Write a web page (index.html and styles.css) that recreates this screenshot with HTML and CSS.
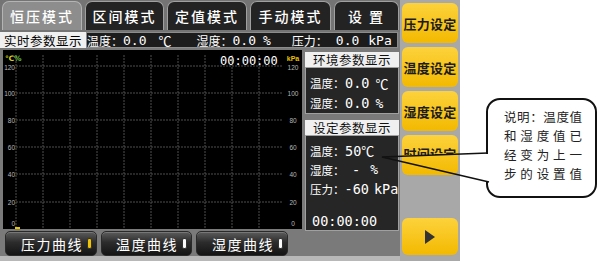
FILE: index.html
```html
<!DOCTYPE html>
<html lang="zh">
<head>
<meta charset="utf-8">
<title>恒压模式</title>
<link rel="stylesheet" href="styles.css">
</head>
<body>
<div class="page">
  <div class="device">
    <div class="main">
      <div class="tabs">
        <div class="tab tab-active w80">恒压模式</div>
        <div class="tab w79">区间模式</div>
        <div class="tab w80">定值模式</div>
        <div class="tab w81">手动模式</div>
        <div class="tab w65">设&nbsp;置</div>
      </div>
      <div class="status">
        <div class="status-label">实时参数显示</div>
        <div class="status-values">
          <span class="lbl">温度：</span><span class="num">0.0</span><span class="unit u1">℃</span>
          <span class="lbl g2">湿度：</span><span class="num">0.0</span><span class="unit u2">%</span>
          <span class="lbl g3">压力：</span><span class="num n3">0.0</span><span class="unit u3">kPa</span>
        </div>
      </div>
      <div class="content">
        <div class="chart">
          <svg width="299" height="179" viewBox="0 0 299 179">
            <g class="grid">
              <line x1="13" y1="5" x2="13" y2="179"/>
              <line x1="40" y1="5" x2="40" y2="179"/>
              <line x1="67" y1="5" x2="67" y2="179"/>
              <line x1="94" y1="5" x2="94" y2="179"/>
              <line x1="121" y1="5" x2="121" y2="179"/>
              <line x1="148" y1="5" x2="148" y2="179"/>
              <line x1="175" y1="5" x2="175" y2="179"/>
              <line x1="202" y1="5" x2="202" y2="179"/>
              <line x1="229" y1="5" x2="229" y2="179"/>
              <line x1="256" y1="5" x2="256" y2="179"/>
              <line x1="13" y1="16" x2="279" y2="16"/>
              <line x1="13" y1="43" x2="279" y2="43"/>
              <line x1="13" y1="70" x2="279" y2="70"/>
              <line x1="13" y1="97" x2="279" y2="97"/>
              <line x1="13" y1="124" x2="279" y2="124"/>
              <line x1="13" y1="152" x2="279" y2="152"/>
            </g>
            <text class="legend" x="2" y="11"><tspan class="lg-y">℃</tspan><tspan class="lg-g">%</tspan></text>
            <g class="axis-left">
              <text x="12" y="20">120</text>
              <text x="12" y="46">100</text>
              <text x="12" y="73">80</text>
              <text x="12" y="100">60</text>
              <text x="12" y="127">40</text>
              <text x="12" y="155">20</text>
              <text x="12" y="176">0</text>
            </g>
            <text class="kpa" x="290" y="11">kPa</text>
            <g class="axis-right">
              <text x="290" y="20">120</text>
              <text x="290" y="46">100</text>
              <text x="290" y="73">80</text>
              <text x="290" y="100">60</text>
              <text x="290" y="127">40</text>
              <text x="290" y="155">20</text>
              <text x="290" y="176">0</text>
            </g>
            <line class="point" x1="12" y1="178" x2="17" y2="178"/>
            <text class="chart-time" x="217" y="15">00:00:00</text>
          </svg>
        </div>
        <div class="panel">
          <div class="panel-head">环境参数显示</div>
          <div class="panel-box env">
            <div class="pline"><span class="plbl">温度：</span><span class="num">0.0</span><span class="punit pu1">℃</span></div>
            <div class="pline"><span class="plbl">湿度：</span><span class="num">0.0</span><span class="punit pu2">%</span></div>
          </div>
          <div class="panel-head head2">设定参数显示</div>
          <div class="panel-box set">
            <div class="pline"><span class="plbl">温度：</span><span class="num">50</span><span class="punit">℃</span></div>
            <div class="pline"><span class="plbl">湿度：</span><span class="num dash">-</span><span class="punit pu3">%</span></div>
            <div class="pline"><span class="plbl">压力：</span><span class="num">-60</span><span class="punit pu4">kPa</span></div>
            <div class="pline ptime"><span class="num">00:00:00</span></div>
          </div>
        </div>
      </div>
      <div class="curves">
        <div class="cbtn w92">压力曲线<span class="pill pill-y"></span></div>
        <div class="cbtn w91">温度曲线<span class="pill"></span></div>
        <div class="cbtn w92">湿度曲线<span class="pill"></span></div>
      </div>
      <div class="footer"></div>
    </div>
    <div class="side">
      <div class="ybtn">压力设定</div>
      <div class="ybtn">温度设定</div>
      <div class="ybtn">湿度设定</div>
      <div class="ybtn ybtn-clip"><span class="clip">时间设定</span></div>
      <div class="side-spacer"></div>
      <div class="ybtn play">
        <svg width="10" height="14" viewBox="0 0 10 14"><polygon points="0,0 10,7 0,14" fill="#333"/></svg>
      </div>
    </div>
  </div>
  <div class="note">
    <div class="note-line">说明：温度值</div>
    <div class="note-line">和湿度值已</div>
    <div class="note-line">经变为上一</div>
    <div class="note-line">步的设置值</div>
  </div>
  <svg class="pointer" width="600" height="261" viewBox="0 0 600 261">
    <rect x="484" y="154" width="6" height="27" fill="#fff"/>
    <polyline points="488,153 382,157 489,182" fill="none" stroke="#111" stroke-width="1.6"/>
  </svg>
</div>
</body>
</html>
```
FILE: styles.css
```css
* { box-sizing: border-box; margin: 0; padding: 0; }
html, body { width: 600px; height: 261px; background: #fff; overflow: hidden; }
body { font-family: "Noto Sans CJK SC", "Noto Sans", sans-serif; }

.page { position: relative; display: flex; width: 600px; height: 261px; }
.device { display: flex; width: 460px; height: 261px; }

.main { width: 400px; background: #7a7a7a; display: flex; flex-direction: column; }

/* tabs */
.tabs { display: flex; gap: 3px; height: 32px; padding: 1px 0 2px 2px; background: #747474; }
.tab {
  display: flex; align-items: center; justify-content: center;
  color: #fff; font-size: 14px; letter-spacing: 2px; font-weight: 500;
  background: #232323; border: 1px solid #a0a0a0; border-bottom: none;
  border-radius: 7px 7px 0 0;
}
.tab-active { background: #8d8d8d; border-color: #b4b4b4; }
.w80 { width: 80px; } .w79 { width: 79px; } .w81 { width: 81px; } .w65 { width: 65px; }

/* status row */
.status { display: flex; height: 16px; margin-bottom: 2px; }
.status-label {
  width: 86px; background: #f0f0f0; color: #000; font-size: 12.5px;
  display: flex; align-items: center; justify-content: center; letter-spacing: 0.5px;
}
.status-values {
  flex: 1; margin-right: 2px; background: #1c1c1c; border: 1px solid #8c8c8c;
  color: #fff; font-size: 12px; display: flex; align-items: center; white-space: nowrap;
}
.lbl { display: inline-block; width: 36px; font-size: 12px; }
.num { font-family: "DejaVu Sans Mono", monospace; font-size: 13px; }
.unit { font-family: "DejaVu Sans Mono", "Noto Sans CJK SC", monospace; font-size: 13px; }
.u1 { margin-left: 12px; }
.g2 { margin-left: 25px; }
.u2 { margin-left: 7px; }
.g3 { margin-left: 21px; }
.n3 { margin-left: 8px; }
.u3 { margin-left: 9px; }

/* content */
.content { display: flex; gap: 3px; height: 179px; padding-left: 3px; }
.chart { width: 299px; height: 179px; background: #000; }
.chart svg { display: block; }
.grid line { stroke: #4e4e4e; stroke-width: 1; stroke-dasharray: 2 1; }
.axis-left text { fill: #b8b8b8; font-family: "Liberation Sans", sans-serif; font-size: 6.5px; text-anchor: end; }
.axis-right text { fill: #b8b8b8; font-family: "Liberation Sans", sans-serif; font-size: 6.5px; text-anchor: middle; }
.kpa { fill: #e6c200; font-family: "Liberation Sans", sans-serif; font-size: 7px; font-weight: 700; text-anchor: middle; }
.legend { font-family: "DejaVu Sans", sans-serif; font-size: 7.5px; font-weight: 700; }
.lg-y { fill: #d9cf1a; }
.lg-g { fill: #6fc040; }
.point { stroke: #e6c800; stroke-width: 2; }
.chart-time { fill: #fff; font-family: "DejaVu Sans Mono", monospace; font-size: 12px; }

.panel { width: 94px; display: flex; flex-direction: column; padding-top: 2px; }
.panel-head {
  height: 15px; background: #f0f0f0; color: #111; font-size: 12.5px; letter-spacing: 0.5px;
  display: flex; align-items: center; justify-content: center;
}
.head2 { margin-top: 6px; }
.panel-box { background: #262626; border: 1px solid #a0a0a0; color: #fff; padding-left: 4px; }
.env { height: 50px; padding-top: 5px; }
.set { flex: 1; padding-top: 5px; }
.pline { height: 20px; display: flex; align-items: center; white-space: nowrap; }
.set .pline { height: 19px; }
.plbl { display: inline-block; width: 35px; font-size: 11.5px; }
.pline .num { font-size: 13.5px; }
.punit { font-family: "DejaVu Sans Mono", "Noto Sans CJK SC", monospace; font-size: 13px; }
.pu1 { margin-left: 6px; }
.pu2 { margin-left: 6px; }
.dash { margin-left: 7px; }
.pu3 { margin-left: 10px; }
.pu4 { margin-left: 5px; font-size: 13.5px; }
.ptime { margin-top: 13px; padding-left: 2px; }

/* curve buttons */
.curves { display: flex; gap: 4px; padding: 2px 0 0 5px; height: 27px; }
.cbtn {
  height: 25px; border-radius: 5px;
  background: linear-gradient(#5c5c5c 0%, #2c2c2c 45%, #141414 100%);
  border: 1px solid #2a2a2a; box-shadow: inset 0 1px 0 #777;
  color: #fff; font-size: 14px; letter-spacing: 1.5px;
  display: flex; align-items: center; justify-content: flex-end; padding-right: 4px; gap: 4px;
}
.w92 { width: 92px; } .w91 { width: 91px; }
.pill { width: 5px; height: 11px; border-radius: 2px; background: #fafafa; border: 1px solid #333; }
.pill-y { background: #f3c200; }
.footer { flex: 1; background: #b8b8b8; }

/* side column */
.side { width: 60px; background: #a8a8a8; display: flex; flex-direction: column; gap: 4px; padding: 3px 2px 6px 2px; }
.ybtn {
  height: 40px; border-radius: 6px; background: linear-gradient(#fcd23c, #f3b900);
  color: #1c1c1c; font-size: 13px; font-weight: 700;
  display: flex; align-items: center; justify-content: center; letter-spacing: 0.3px;
}
.ybtn-clip { align-items: flex-start; padding-top: 12px; }
.clip { display: block; height: 8px; line-height: 13px; overflow: hidden; }
.side-spacer { flex: 1; }
.play { height: 37px; }

/* annotation */
.note {
  position: absolute; left: 486px; top: 98px; width: 111px; height: 100px;
  background: #fff; border: 2px solid #111; border-radius: 14px;
  padding: 7px 0 0 16px; color: #222; font-size: 12.5px;
}
.note-line { width: 78px; height: 19px; line-height: 19px; text-align: justify; text-align-last: justify; }
.pointer { position: absolute; left: 0; top: 0; pointer-events: none; }
```
